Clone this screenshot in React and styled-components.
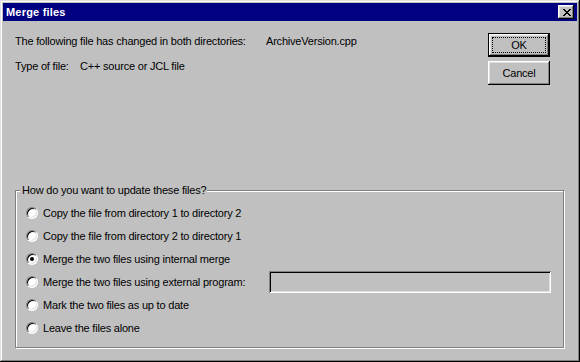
import React from 'react';
import styled, { createGlobalStyle } from 'styled-components';

const GlobalStyle = createGlobalStyle`
	html, body {
		margin: 0;
		padding: 0;
		background: #c0c0c0;
	}
	body {
		font-family: "Liberation Sans", Arial, sans-serif;
		font-size: 11px;
		letter-spacing: -0.2px;
		color: #000;
	}
`;

const closeGlyph = [
	'##....##',
	'.##..##.',
	'..####..',
	'...##...',
	'..####..',
	'.##..##.',
	'##....##',
];

const options = [
	'Copy the file from directory 1 to directory 2',
	'Copy the file from directory 2 to directory 1',
	'Merge the two files using internal merge',
	'Merge the two files using external program:',
	'Mark the two files as up to date',
	'Leave the files alone',
];

function CloseIcon() {
	return (
		<svg width="8" height="7" viewBox="0 0 8 7" shapeRendering="crispEdges">
			{closeGlyph.map((row, y) =>
				row.split('').map((c, x) =>
					c === '#' ? <rect key={`${x}-${y}`} x={x} y={y} width="1" height="1" fill="#000" /> : null
				)
			)}
		</svg>
	);
}

function App() {
	const [choice, setChoice] = React.useState(2);

	return (
		<>
			<GlobalStyle />
			<Window>
				<TitleBar>
					<Title>Merge files</Title>
					<CloseButton aria-label="Close">
						<CloseIcon />
					</CloseButton>
				</TitleBar>
				<Content>
					<TopRow>
						<Info>
							<InfoLine>
								<span>The following file has changed in both directories:</span>
								<Value $left={266}>ArchiveVersion.cpp</Value>
							</InfoLine>
							<InfoLine>
								<span>Type of file:</span>
								<Value $left={80}>C++ source or JCL file</Value>
							</InfoLine>
						</Info>
						<Buttons>
							<Button $default>
								<FocusRing>OK</FocusRing>
							</Button>
							<Button>Cancel</Button>
						</Buttons>
					</TopRow>
					<GroupBox>
						<Legend>How do you want to update these files?</Legend>
						{options.map((label, i) => (
							<OptionRow key={label} onClick={() => setChoice(i)}>
								<Radio $checked={choice === i} />
								<span>{label}</span>
								{i === 3 && <Field />}
							</OptionRow>
						))}
					</GroupBox>
				</Content>
			</Window>
		</>
	);
}

const Window = styled.div`
	box-sizing: border-box;
	width: 580px;
	height: 362px;
	padding: 3px;
	display: flex;
	flex-direction: column;
	background: #c0c0c0;
	box-shadow: inset -1px -1px #000, inset 1px 1px #dfdfdf, inset -2px -2px #808080,
		inset 2px 2px #fff;
`;

const TitleBar = styled.div`
	height: 18px;
	display: flex;
	align-items: center;
	justify-content: space-between;
	padding: 0 3px 0 3px;
	background: #000080;
	color: #fff;
`;

const Title = styled.span`
	font-weight: bold;
	font-size: 11px;
	letter-spacing: 0.2px;
`;

const CloseButton = styled.button`
	box-sizing: border-box;
	width: 16px;
	height: 14px;
	padding: 0 0 0 1px;
	border: none;
	display: flex;
	align-items: center;
	justify-content: center;
	background: #c0c0c0;
	box-shadow: inset -1px -1px #000, inset 1px 1px #fff, inset -2px -2px #808080,
		inset 2px 2px #dfdfdf;
`;

const Content = styled.div`
	flex: 1;
	display: flex;
	flex-direction: column;
	padding: 12px 12px 11px 12px;
`;

const TopRow = styled.div`
	display: flex;
	justify-content: space-between;
`;

const Info = styled.div`
	display: flex;
	flex-direction: column;
	gap: 11px;
	padding-top: 1px;
`;

const InfoLine = styled.div`
	position: relative;
	height: 14px;
	line-height: 14px;
	white-space: nowrap;
`;

const Value = styled.span`
	position: absolute;
	top: 0;
	left: ${(p) => p.$left - 15}px;
`;

const Buttons = styled.div`
	display: flex;
	flex-direction: column;
	gap: 4px;
	margin-right: 15px;
`;

const Button = styled.button`
	box-sizing: border-box;
	width: 62px;
	height: 24px;
	padding: 0;
	display: flex;
	align-items: center;
	justify-content: center;
	font-family: "Liberation Sans", Arial, sans-serif;
	font-size: 11px;
	letter-spacing: -0.2px;
	color: #000;
	background: #c0c0c0;
	border: ${(p) => (p.$default ? '1px solid #000' : 'none')};
	box-shadow: inset -1px -1px #000, inset 1px 1px #fff, inset -2px -2px #808080,
		inset 2px 2px #dfdfdf;
`;

const FocusRing = styled.span`
	box-sizing: border-box;
	width: 54px;
	height: 16px;
	line-height: 14px;
	text-align: center;
	border: 1px dotted #000;
`;

const GroupBox = styled.fieldset`
	margin: auto 1px 0 0;
	padding: 4px 12px 8px 10px;
	border: 1px solid #808080;
	box-shadow: inset 1px 1px #fff, 1px 1px #fff;
	display: flex;
	flex-direction: column;
`;

const Legend = styled.legend`
	padding: 0 1px 0 2px;
	margin-left: -6px;
	line-height: 13px;
	background: #c0c0c0;
`;

const OptionRow = styled.div`
	height: 23px;
	display: flex;
	align-items: center;
	gap: 5px;
	white-space: nowrap;
	cursor: default;
`;

const Radio = styled.span`
	position: relative;
	box-sizing: border-box;
	flex: none;
	width: 12px;
	height: 12px;
	border-radius: 50%;
	border: 1px solid;
	border-color: #808080 #fff #fff #808080;
	background: #fff;
	box-shadow: inset 1px 1px #000, inset -1px -1px #dfdfdf;

	&::after {
		content: '';
		display: ${(p) => (p.$checked ? 'block' : 'none')};
		position: absolute;
		left: 3px;
		top: 3px;
		width: 4px;
		height: 4px;
		border-radius: 50%;
		background: #000;
	}
`;

const Field = styled.span`
	box-sizing: border-box;
	width: 282px;
	height: 22px;
	margin-left: auto;
	background: #c0c0c0;
	box-shadow: inset 1px 1px #808080, inset -1px -1px #fff, inset 2px 2px #000,
		inset -2px -2px #dfdfdf;
`;

export default App;
